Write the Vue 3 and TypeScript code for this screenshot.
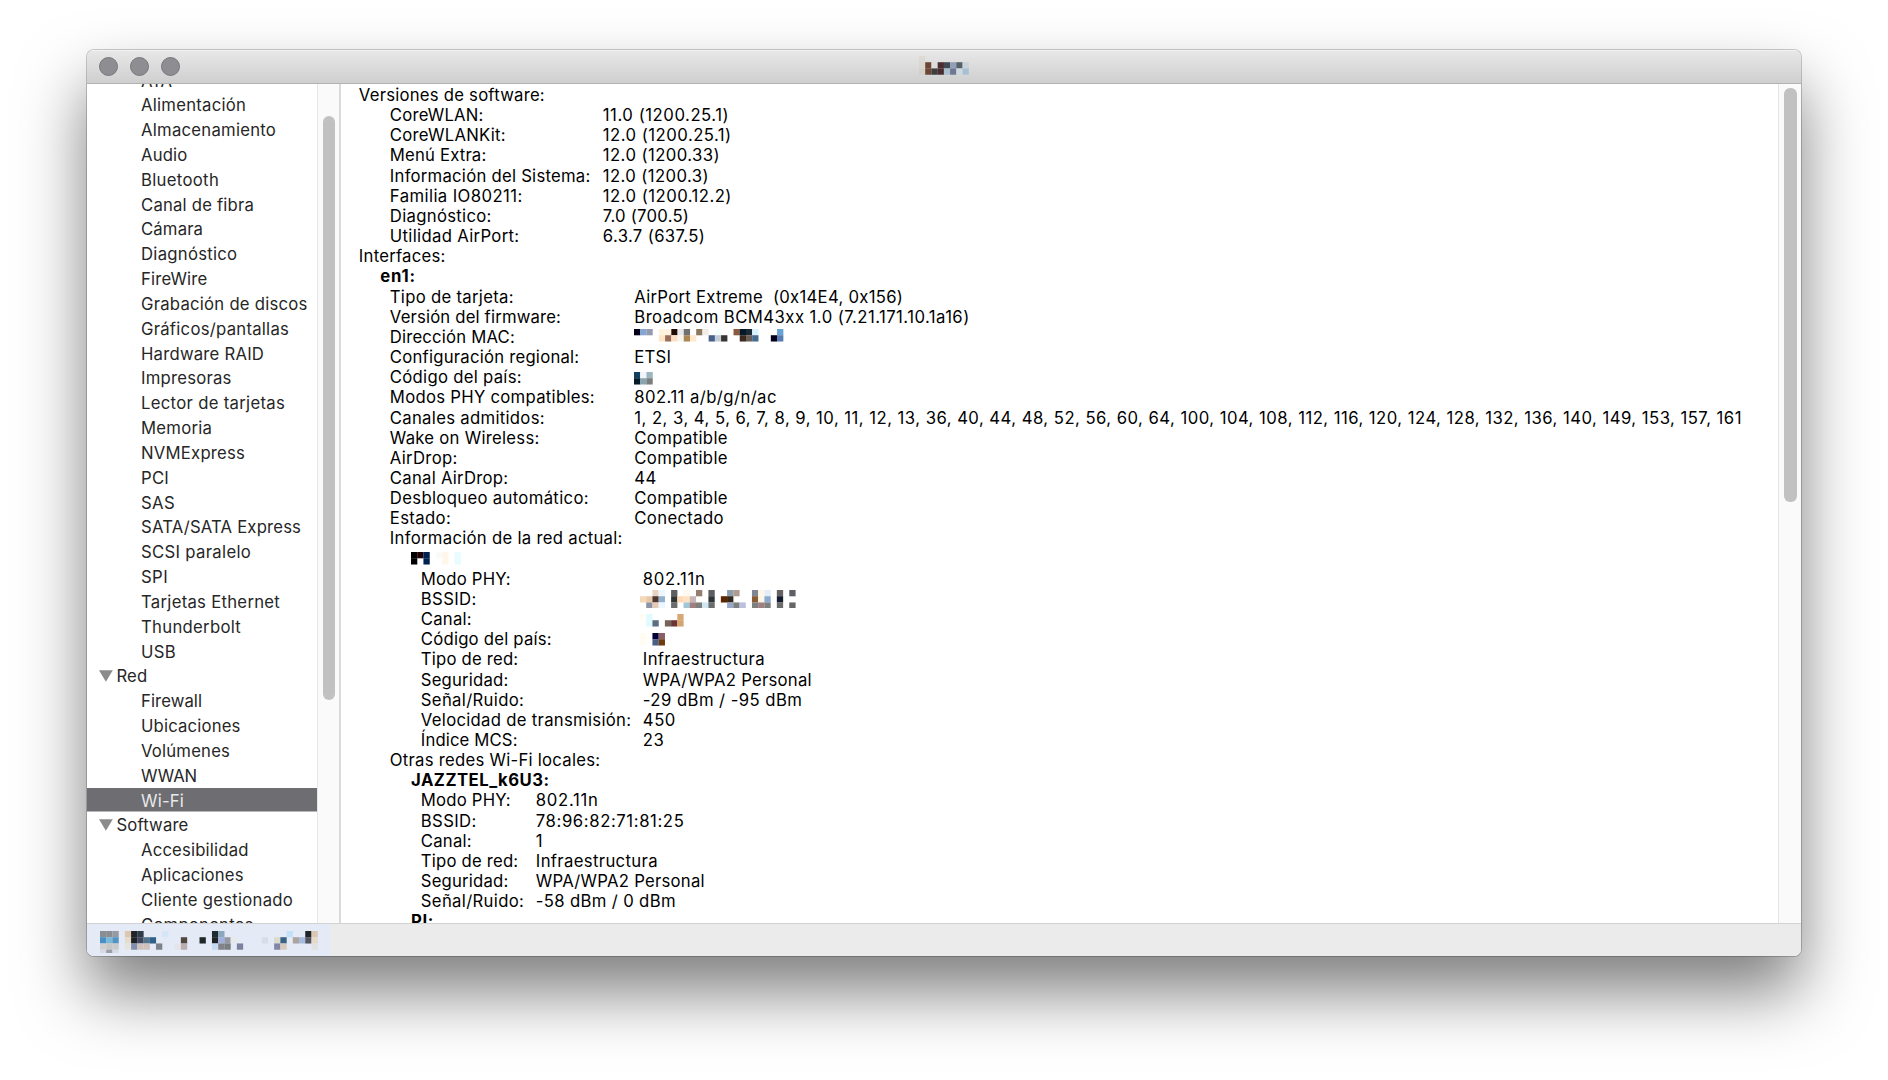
<script setup lang="ts">
import { nextTick, onMounted, ref } from 'vue'

type Cell = [col: number, color: string]
type Mosaic = Cell[][]
interface NavItem { label: string; w: number; group?: boolean; selected?: boolean }
interface Row { level: string; label: string; w: number; value?: string; vw?: number; vx?: number; mosaic?: Mosaic; dy?: number }

const CELL = 6.22

const nav: NavItem[] = [
  { label: 'ATA', w: 30 },
  { label: 'Alimentación', w: 104 },
  { label: 'Almacenamiento', w: 134 },
  { label: 'Audio', w: 45.3 },
  { label: 'Bluetooth', w: 77 },
  { label: 'Canal de fibra', w: 112 },
  { label: 'Cámara', w: 61 },
  { label: 'Diagnóstico', w: 95.3 },
  { label: 'FireWire', w: 65.3 },
  { label: 'Grabación de discos', w: 165.5 },
  { label: 'Gráficos/pantallas', w: 147 },
  { label: 'Hardware RAID', w: 122 },
  { label: 'Impresoras', w: 89.5 },
  { label: 'Lector de tarjetas', w: 143 },
  { label: 'Memoria', w: 70 },
  { label: 'NVMExpress', w: 103 },
  { label: 'PCI', w: 27 },
  { label: 'SAS', w: 33 },
  { label: 'SATA/SATA Express', w: 159 },
  { label: 'SCSI paralelo', w: 109 },
  { label: 'SPI', w: 26 },
  { label: 'Tarjetas Ethernet', w: 138 },
  { label: 'Thunderbolt', w: 99 },
  { label: 'USB', w: 34 },
  { label: 'Red', w: 30, group: true },
  { label: 'Firewall', w: 60 },
  { label: 'Ubicaciones', w: 98.5 },
  { label: 'Volúmenes', w: 88 },
  { label: 'WWAN', w: 55 },
  { label: 'Wi-Fi', w: 42, selected: true },
  { label: 'Software', w: 71, group: true },
  { label: 'Accesibilidad', w: 106.5 },
  { label: 'Aplicaciones', w: 101.5 },
  { label: 'Cliente gestionado', w: 151 },
  { label: 'Componentes', w: 111.5 },
]

const titleMosaic: Mosaic = [
  [[0, '#dcdad2']],
  [[0, '#d9d7cd'], [1, '#6b4633'], [2, '#dcdcdc'], [3, '#4a2d30'], [4, '#424b52'], [5, '#8fa0b8'], [6, '#566068'], [7, '#c8d4da']],
  [[0, '#d2d0c8'], [1, '#6b4633'], [2, '#3f3d3e'], [3, '#4a2d30'], [4, '#a9c0cf'], [5, '#717792'], [6, '#ced8de'], [7, '#a9c0d4']],
]
const macMosaic: Mosaic = [
  [[0, '#02001a'], [1, '#84a6d3'], [2, '#959aae'], [4, '#fff3de'], [5, '#fff3de'], [6, '#1f0c02'], [7, '#e8e7ea'], [8, '#6f7072'], [10, '#8a795f'], [11, '#f1eeea'], [13, '#f4feff'], [16, '#8a5a3c'], [17, '#001a29'], [18, '#1a2933'], [19, '#daf2fe'], [23, '#67a3d4']],
  [[4, '#ffe5c5'], [5, '#9a6f5a'], [6, '#fbdfc4'], [7, '#f7f4ee'], [8, '#ab8655'], [9, '#ffe8cb'], [12, '#47618a'], [13, '#c3ced7'], [14, '#373635'], [17, '#3d291e'], [18, '#6d605a'], [19, '#486c90'], [22, '#00001c'], [23, '#577cb1']],
]
const countryMosaic: Mosaic = [
  [[0, '#124060'], [1, '#f3f6f8'], [2, '#9cb5c0']],
  [[0, '#031a29'], [1, '#8aa3b0'], [2, '#7a7f7c']],
]
const networkMosaic: Mosaic = [
  [[0, '#000000'], [1, '#200004'], [2, '#00204f'], [4, '#fafafa'], [5, '#fff6ea'], [7, '#e8fcff']],
  [[0, '#000000'], [2, '#00204f'], [5, '#fff6ea'], [7, '#e8fcff']],
]
const bssidMosaic: Mosaic = [
  [[2, '#e8d3c3'], [3, '#eef7ff'], [5, '#5c5e60'], [7, '#fff9ef'], [9, '#947e70'], [11, '#5c5e60'], [14, '#8b9eae'], [15, '#ae9c91'], [18, '#7f8792'], [19, '#fff5e8'], [20, '#e1edf8'], [22, '#666264'], [24, '#5d6064']],
  [[0, '#f5d8b8'], [1, '#e8c8a8'], [2, '#4f382c'], [3, '#92afcd'], [5, '#303534'], [6, '#ffd9b7'], [7, '#ffe3c0'], [8, '#c8b5b5'], [11, '#303638'], [13, '#5a2500'], [14, '#33291a'], [18, '#8a5a30'], [19, '#fff7e5'], [20, '#8cabd1'], [22, '#151c30']],
  [[1, '#8c94a3'], [2, '#e3c9b6'], [3, '#eef7ff'], [5, '#6c6c6c'], [7, '#a2c5d8'], [8, '#a07f80'], [9, '#7c807e'], [10, '#d0e6f2'], [11, '#6c6c6c'], [14, '#9ba8cc'], [15, '#7c807e'], [16, '#bcbfdf'], [18, '#7c807e'], [19, '#a07f80'], [20, '#7c807e'], [22, '#6c6c6c'], [24, '#666666']],
]
const channelMosaic: Mosaic = [
  [[0, '#fffdf5'], [1, '#e0fbff'], [6, '#d8a774']],
  [[1, '#e0fbff'], [2, '#5c6e80'], [4, '#74655c'], [5, '#6d3434'], [6, '#d5a570']],
]
const countryMosaic2: Mosaic = [
  [[0, '#fffdf2'], [2, '#02003a'], [3, '#8a5f66']],
  [[0, '#fffdf2'], [2, '#486086'], [3, '#6e3b10']],
]
const pathMosaic: Mosaic = [
  [[0, '#8a8d92'], [1, '#8a8d92'], [2, '#979aa2'], [4, '#dcc8b0'], [5, '#202426'], [6, '#2f3b49'], [10, '#d5e7f7'], [18, '#1e2d2e'], [19, '#8aa8bd'], [30, '#c0e1f7'], [33, '#202428'], [34, '#dbc7b3']],
  [[0, '#4a90c4'], [1, '#7bb8d8'], [2, '#5393c1'], [4, '#e5dccb'], [5, '#1f2224'], [6, '#3f4760'], [7, '#53748a'], [8, '#31618a'], [13, '#504740'], [16, '#222628'], [18, '#202426'], [19, '#9fb1d8'], [20, '#9499a4'], [21, '#e6eaea'], [26, '#d8dde9'], [28, '#dcdacb'], [29, '#396384'], [31, '#aba49f'], [32, '#a6bbe0'], [33, '#54555e'], [34, '#e5dbc8']],
  [[0, '#cfcfcf'], [1, '#c6c6c6'], [2, '#cacaca'], [4, '#e5e4e0'], [5, '#808dab'], [6, '#cdc0bd'], [7, '#cdc0bd'], [9, '#7e838b'], [12, '#e5e4e8'], [13, '#baafae'], [18, '#c5daf2'], [19, '#808488'], [20, '#7a7d81'], [22, '#7e82a0'], [28, '#8285a5'], [29, '#d8c9bd'], [34, '#e2e1e2']],
  [[0, '#d6dae6'], [1, '#9a9ea6'], [2, '#d6dae6']],
]

const channels = '1, 2, 3, 4, 5, 6, 7, 8, 9, 10, 11, 12, 13, 36, 40, 44, 48, 52, 56, 60, 64, 100, 104, 108, 112, 116, 120, 124, 128, 132, 136, 140, 149, 153, 157, 161'

const rows: Row[] = [
  { level: 'l0', label: 'Versiones de software:', w: 185 },
  { level: 'l1', label: 'CoreWLAN:', w: 92.7, value: '11.0 (1200.25.1)', vw: 125.3, vx: 213 },
  { level: 'l1', label: 'CoreWLANKit:', w: 115, value: '12.0 (1200.25.1)', vw: 127.8, vx: 213 },
  { level: 'l1', label: 'Menú Extra:', w: 95.5, value: '12.0 (1200.33)', vw: 116, vx: 213 },
  { level: 'l1', label: 'Información del Sistema:', w: 199.6, value: '12.0 (1200.3)', vw: 105, vx: 213 },
  { level: 'l1', label: 'Familia IO80211:', w: 131.8, value: '12.0 (1200.12.2)', vw: 128, vx: 213 },
  { level: 'l1', label: 'Diagnóstico:', w: 100.8, value: '7.0 (700.5)', vw: 85.3, vx: 213 },
  { level: 'l1', label: 'Utilidad AirPort:', w: 128.6, value: '6.3.7 (637.5)', vw: 101.2, vx: 213 },
  { level: 'l0', label: 'Interfaces:', w: 85.7 },
  { level: 'b1', label: 'en1:', w: 34.7 },
  { level: 'l1', label: 'Tipo de tarjeta:', w: 122.9, value: 'AirPort Extreme  (0x14E4, 0x156)', vw: 267.8, vx: 244.5 },
  { level: 'l1', label: 'Versión del firmware:', w: 170.2, value: 'Broadcom BCM43xx 1.0 (7.21.171.10.1a16)', vw: 334.3, vx: 244.5 },
  { level: 'l1', label: 'Dirección MAC:', w: 124, vx: 244.3, mosaic: macMosaic, dy: 2 },
  { level: 'l1', label: 'Configuración regional:', w: 188.5, value: 'ETSI', vw: 35.7, vx: 244.5 },
  { level: 'l1', label: 'Código del país:', w: 131, vx: 244.3, mosaic: countryMosaic, dy: 4.6 },
  { level: 'l1', label: 'Modos PHY compatibles:', w: 204, value: '802.11 a/b/g/n/ac', vw: 141.5, vx: 244.5 },
  { level: 'l1', label: 'Canales admitidos:', w: 154, value: channels, vw: 1106.5, vx: 244.5 },
  { level: 'l1', label: 'Wake on Wireless:', w: 148.7, value: 'Compatible', vw: 92.5, vx: 244.5 },
  { level: 'l1', label: 'AirDrop:', w: 66.8, value: 'Compatible', vw: 92.5, vx: 244.5 },
  { level: 'l1', label: 'Canal AirDrop:', w: 117.4, value: '44', vw: 21.5, vx: 244.5 },
  { level: 'l1', label: 'Desbloqueo automático:', w: 198, value: 'Compatible', vw: 92.5, vx: 244.5 },
  { level: 'l1', label: 'Estado:', w: 60.2, value: 'Conectado', vw: 88.5, vx: 244.5 },
  { level: 'l1', label: 'Información de la red actual:', w: 231.8 },
  { level: 'b2', label: '', w: 0, vx: 0, mosaic: networkMosaic, dy: 3.4 },
  { level: 'l2', label: 'Modo PHY:', w: 89, value: '802.11n', vw: 61.7, vx: 222 },
  { level: 'l2', label: 'BSSID:', w: 54.7, vx: 219.3, mosaic: bssidMosaic, dy: 0.6 },
  { level: 'l2', label: 'Canal:', w: 50, vx: 219.3, mosaic: channelMosaic, dy: 5 },
  { level: 'l2', label: 'Código del país:', w: 130, vx: 219.3, mosaic: countryMosaic2, dy: 3.5 },
  { level: 'l2', label: 'Tipo de red:', w: 96.5, value: 'Infraestructura', vw: 121, vx: 222 },
  { level: 'l2', label: 'Seguridad:', w: 86.5, value: 'WPA/WPA2 Personal', vw: 168, vx: 222 },
  { level: 'l2', label: 'Señal/Ruido:', w: 102.3, value: '-29 dBm / -95 dBm', vw: 158.5, vx: 222 },
  { level: 'l2', label: 'Velocidad de transmisión:', w: 209.5, value: '450', vw: 32, vx: 222 },
  { level: 'l2', label: 'Índice MCS:', w: 95.7, value: '23', vw: 20.5, vx: 222 },
  { level: 'l1', label: 'Otras redes Wi-Fi locales:', w: 209.5 },
  { level: 'b2', label: 'JAZZTEL_k6U3:', w: 137.5 },
  { level: 'l2', label: 'Modo PHY:', w: 89, value: '802.11n', vw: 61.7, vx: 115 },
  { level: 'l2', label: 'BSSID:', w: 54.7, value: '78:96:82:71:81:25', vw: 147.5, vx: 115 },
  { level: 'l2', label: 'Canal:', w: 50, value: '1', vw: 5, vx: 115 },
  { level: 'l2', label: 'Tipo de red:', w: 96.5, value: 'Infraestructura', vw: 121, vx: 115 },
  { level: 'l2', label: 'Seguridad:', w: 86.5, value: 'WPA/WPA2 Personal', vw: 168, vx: 115 },
  { level: 'l2', label: 'Señal/Ruido:', w: 102.3, value: '-58 dBm / 0 dBm', vw: 139, vx: 115 },
  { level: 'b2', label: 'PI:', w: 21.7 },
]

// Tracks each label so that its drawn width equals the width in its data.
const root = ref<HTMLElement | null>(null)
function track() {
  root.value?.querySelectorAll<HTMLElement>('[data-w]').forEach((el) => {
    const n = el.textContent?.length ?? 0
    const target = Number(el.dataset.w) + 1.1
    if (n < 2) return
    el.style.letterSpacing = '0px'
    const natural = el.getBoundingClientRect().width
    el.style.letterSpacing = `${(target - natural) / n}px`
  })
}
onMounted(async () => {
  await nextTick()
  track()
  document.fonts.ready.then(track)
})

const cells = (m: Mosaic) => m.flatMap((r, y) => r.map(([x, fill]) => ({ x: x * CELL, y: y * CELL, fill })))
</script>

<template>
  <div ref="root" class="desktop">
    <div class="window">
      <header class="titlebar">
        <div class="lights"><i /><i /><i /></div>
        <svg class="title-mosaic" width="50" height="18.7">
          <rect v-for="(c, i) in cells(titleMosaic)" :key="i" :x="c.x" :y="c.y" width="6.3" height="6.3" :fill="c.fill" />
        </svg>
      </header>

      <div class="body">
        <nav class="sidebar">
          <div v-for="item in nav" :key="item.label" class="item" :class="{ group: item.group, selected: item.selected }">
            <svg v-if="item.group" class="tri" width="14" height="12" viewBox="0 0 14 12"><path d="M0 0.3H13.8L6.9 11.8Z" fill="#8b8b8b" /></svg>
            <span :data-w="item.w">{{ item.label }}</span>
          </div>
        </nav>
        <div class="track left"><div class="thumb" /></div>

        <main class="details">
          <div v-for="(r, i) in rows" :key="i" class="row" :class="r.level">
            <div class="key" :style="{ width: (r.vx ?? 300) + 'px' }"><span v-if="r.label" :data-w="r.w">{{ r.label }}</span></div>
            <span v-if="r.value" :data-w="r.vw" class="value">{{ r.value }}</span>
            <svg v-if="r.mosaic" class="mosaic" :style="{ marginTop: r.dy + 'px' }" width="160" height="18.7">
              <rect v-for="(c, j) in cells(r.mosaic)" :key="j" :x="c.x" :y="c.y" width="6.3" height="6.3" :fill="c.fill" />
            </svg>
          </div>
        </main>
        <div class="track right"><div class="thumb" /></div>
      </div>

      <footer class="pathbar">
        <div class="path">
          <svg width="220" height="21.6">
            <rect v-for="(c, i) in cells(pathMosaic)" :key="i" :x="c.x" :y="c.y" width="6.3" height="6.3" :fill="c.fill" />
          </svg>
        </div>
      </footer>
    </div>
  </div>
</template>

<style>
html, body { background: #fff; overflow: hidden; }
</style>

<style scoped>
.desktop {
  box-sizing: border-box;
  width: 1888px;
  height: 1080px;
  padding: 50px 86px 0 87px;
  overflow: hidden;
  background: #fff;
  font-family: Inter, "Liberation Sans", sans-serif;
  font-size: 16.7px;
  color: #000;
}
.window {
  display: flex;
  flex-direction: column;
  width: 1714px;
  height: 906px;
  border-radius: 7px;
  overflow: hidden;
  background: #fff;
  box-shadow: 0 0 0 1px rgba(0, 0, 0, 0.2), 0 36px 66px rgba(0, 0, 0, 0.51);
}
.titlebar {
  box-sizing: border-box;
  flex: none;
  display: flex;
  height: 34px;
  background: linear-gradient(#e8e8e8, #cfcfcf);
  border-bottom: 1px solid #b2b2b2;
  box-shadow: inset 0 1px 0 #f2f2f2;
}
.lights { display: flex; gap: 12px; padding: 7px 0 0 12px; width: 820px; }
.lights i {
  box-sizing: border-box;
  width: 19px;
  height: 19px;
  border-radius: 50%;
  background: #8e8d92;
  border: 1px solid #77767b;
}
.title-mosaic { margin-top: 6.3px; }
.body { display: flex; flex: none; height: 839px; overflow: hidden; }
.sidebar { width: 230px; flex: none; overflow: hidden; color: #262626; }
.sidebar .item {
  display: flex;
  align-items: center;
  height: 24.83px;
  padding-left: 54px;
  white-space: pre;
}
.sidebar .item:first-child { margin-top: -15.9px; }
.sidebar .group { padding-left: 12px; }
.sidebar .group .tri { margin-right: 3.4px; margin-top: -1px; }
.sidebar .selected { color: #e9e9e9; background: linear-gradient(#6e6d72, #6e6d72) 0 0 / 100% 23.5px no-repeat; }
.track { box-sizing: border-box; flex: none; background: #fafafa; }
.track.left {
  width: 24px;
  padding: 32px 0 0 5px;
  border-left: 1px solid #e6e6e6;
  border-right: 2px solid #dadada;
}
.track.right { width: 23px; padding: 4px 0 0 5px; border-left: 1px solid #e4e4e4; }
.thumb { width: 12px; border-radius: 6px; background: #c1c1c1; }
.left .thumb { height: 584px; }
.right .thumb { width: 12.5px; height: 414px; }
.details { flex: 1; overflow: hidden; padding-top: 1px; }
.row { display: flex; height: 20.17px; line-height: 20.17px; white-space: pre; }
.key { flex: none; }
.l0 { padding-left: 17.8px; }
.l1 { padding-left: 48.8px; }
.l2 { padding-left: 79.8px; }
.b1 { padding-left: 39.2px; font-weight: 700; }
.b2 { padding-left: 70px; font-weight: 700; }
.mosaic { flex: none; }
.pathbar {
  box-sizing: border-box;
  flex: 1;
  display: flex;
  background: #ebebeb;
  border-top: 1px solid #d2d2d2;
}
.path { width: 243px; background: #e4eaf6; padding: 7px 0 0 13px; box-sizing: border-box; }
.path svg { display: block; }
</style>
